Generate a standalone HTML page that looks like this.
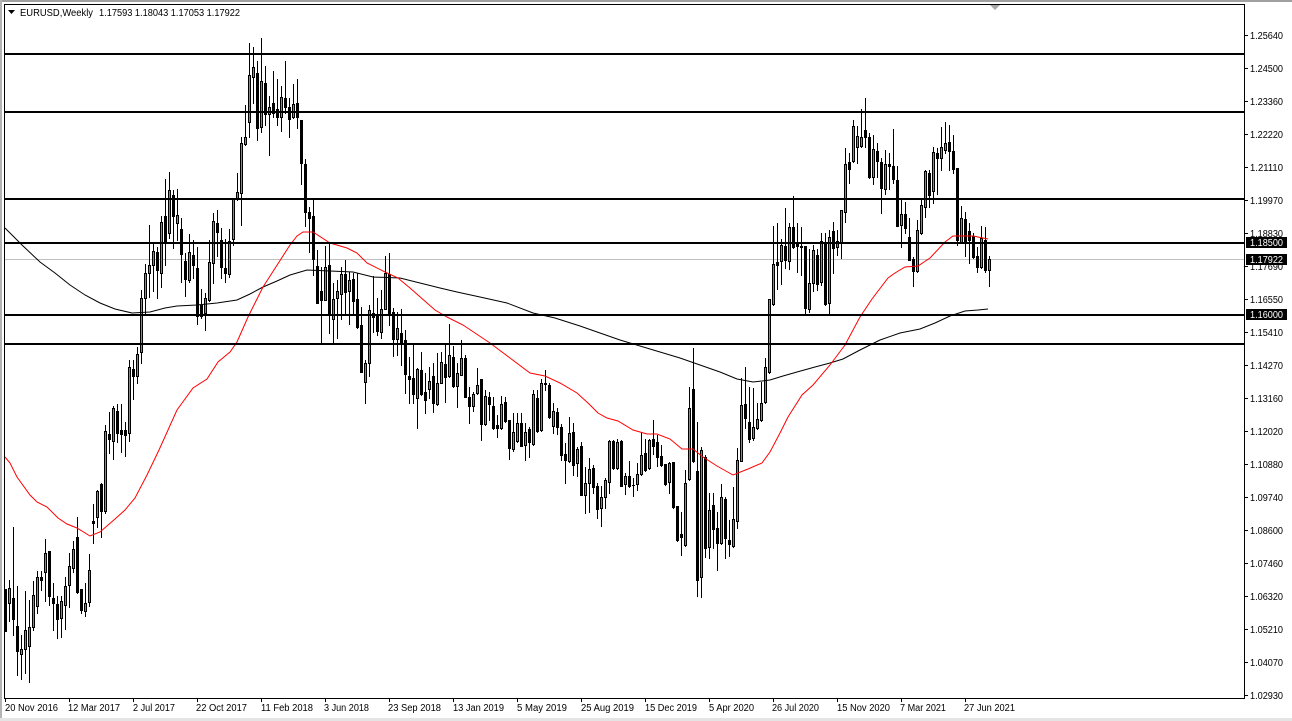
<!DOCTYPE html>
<html><head><meta charset="utf-8"><title>EURUSD,Weekly</title>
<style>
html,body{margin:0;padding:0;background:#fff;width:1292px;height:721px;overflow:hidden}
svg{display:block;position:absolute;left:0;top:0}
text{font-family:"Liberation Sans",sans-serif;font-size:10px;fill:#000}
.w{fill:#fff}
</style></head><body>
<svg width="1292" height="721" viewBox="0 0 1292 721" xmlns="http://www.w3.org/2000/svg">
<rect width="1292" height="721" fill="#fff"/>
<rect x="0" y="0" width="1292" height="2" fill="#a0a0a0"/>
<rect x="0" y="0" width="2" height="721" fill="#b4b4b4"/>
<rect x="0" y="718" width="1292" height="3" fill="#e4e4e4"/>
<g shape-rendering="crispEdges">
<rect x="4" y="4" width="1" height="695" fill="#000"/>
<rect x="4" y="4" width="1241" height="1" fill="#000"/>
<rect x="1244" y="4" width="1" height="695" fill="#000"/>
<rect x="4" y="698" width="1241" height="1" fill="#000"/>
<rect x="5" y="259" width="1239" height="1" fill="#c0c0c0"/>
<path fill="none" stroke="#000" stroke-width="1" d="M5.5 589V632M9.5 580V622M13.5 527V636M17.5 586V676M21.5 635V680M25.5 591V674M29.5 600V683M33.5 581V631M37.5 571V614M41.5 571V591M45.5 539V602M49.5 551V606M53.5 583V631M57.5 596V639M61.5 596V638M65.5 577V630M69.5 553V608M73.5 541V573M77.5 517V594M81.5 589V614M85.5 583V617M89.5 554V607M93.5 504V544M97.5 490V528M101.5 483V538M105.5 425V514M109.5 412V454M113.5 406V460M117.5 404V443M121.5 404V453M125.5 422V457M129.5 360V442M133.5 360V400M137.5 347V384M141.5 290V364M145.5 264V314M149.5 225V298M153.5 243V292M157.5 247V299M161.5 216V288M165.5 179V266M169.5 172V239M173.5 190V249M177.5 189V241M181.5 218V283M185.5 253V297M189.5 234V283M193.5 240V279M197.5 247V325M201.5 289V319M205.5 293V331M209.5 240V302M213.5 213V284M217.5 210V257M221.5 228V279M225.5 239V283M229.5 229V278M233.5 198V246M237.5 173V201M241.5 137V226M245.5 105V146M249.5 43V138M253.5 47V104M257.5 61V141M261.5 38V133M265.5 66V126M269.5 96V156M273.5 71V118M277.5 79V126M281.5 86V132M285.5 61V114M289.5 98V138M293.5 84V119M297.5 79V129M301.5 120V185M305.5 159V227M309.5 207V253M313.5 200V276M317.5 250V304M321.5 267V344M325.5 246V301M329.5 242V334M333.5 283V344M337.5 280V339M341.5 267V320M345.5 260V314M349.5 272V325M353.5 273V316M357.5 273V329M361.5 307V373M365.5 360V404M369.5 305V377M373.5 276V333M377.5 298V336M381.5 290V339M385.5 256V310M389.5 253V326M393.5 308V357M397.5 312V356M401.5 309V366M405.5 330V394M409.5 357V404M413.5 344V404M417.5 368V429M421.5 352V396M425.5 373V414M429.5 367V399M433.5 363V413M437.5 353V406M441.5 352V384M445.5 344V403M449.5 324V378M453.5 346V388M457.5 363V408M461.5 340V376M465.5 355V398M469.5 387V424M473.5 392V412M477.5 368V395M481.5 379V441M485.5 390V426M489.5 392V421M493.5 397V430M497.5 415V438M501.5 396V430M505.5 397V423M509.5 420V460M513.5 413V452M517.5 413V443M521.5 413V447M525.5 423V461M529.5 427V458M533.5 390V446M537.5 390V433M541.5 379V432M545.5 370V391M549.5 383V419M553.5 403V434M557.5 408V435M561.5 424V461M565.5 443V484M569.5 417V463M573.5 423V476M577.5 447V477M581.5 442V496M585.5 467V514M589.5 458V513M593.5 465V494M597.5 483V519M601.5 486V527M605.5 478V509M609.5 440V494M613.5 440V470M617.5 439V470M621.5 440V487M625.5 473V495M629.5 461V488M633.5 478V497M637.5 463V491M641.5 432V476M645.5 439V472M649.5 439V470M653.5 420V455M657.5 435V467M661.5 445V467M665.5 464V486M669.5 462V494M673.5 462V509M677.5 506V542M681.5 512V556M685.5 470V547M689.5 387V481M693.5 348V463M697.5 422V597M701.5 447V598M705.5 455V558M709.5 493V559M713.5 493V549M717.5 512V571M721.5 484V545M725.5 497V559M729.5 520V557M733.5 487V548M737.5 448V529M741.5 378V462M745.5 367V429M749.5 387V443M753.5 388V441M757.5 403V430M761.5 382V422M765.5 358V404M769.5 299V374M773.5 226V306M777.5 223V290M781.5 239V285M785.5 208V269M789.5 223V270M793.5 196V249M797.5 223V273M801.5 227V276M805.5 246V314M809.5 249V313M813.5 245V292M817.5 249V291M821.5 233V286M825.5 233V306M829.5 230V316M833.5 222V274M837.5 230V256M841.5 210V259M845.5 148V223M849.5 153V184M853.5 120V163M857.5 126V164M861.5 109V148M865.5 98V148M869.5 133V179M873.5 135V185M877.5 143V178M881.5 158V214M885.5 150V195M889.5 153V190M893.5 129V184M897.5 166V227M901.5 198V248M905.5 202V234M909.5 218V261M913.5 257V287M917.5 220V273M921.5 198V235M925.5 170V218M929.5 170V208M933.5 147V204M937.5 148V195M941.5 127V171M945.5 122V154M949.5 125V171M953.5 135V174M957.5 168V246M961.5 206V244M965.5 212V257M969.5 223V264M973.5 233V259M977.5 247V273M981.5 226V269M985.5 227V273M989.5 256V287"/>
<path fill="none" stroke="#000" stroke-width="3" d="M5.5 589V632M9.5 588V604M13.5 598V620M17.5 626V652M21.5 649V655M25.5 630V650M29.5 627V647M33.5 595V628M37.5 577V607M41.5 577V581M45.5 553V573M49.5 551V597M53.5 598V604M57.5 604V620M61.5 601V619M65.5 586V606M69.5 566V586M73.5 549V569M77.5 537V593M81.5 589V611M85.5 603V612M89.5 570V603M93.5 521V524M97.5 491V518M101.5 484V512M105.5 431V512M109.5 434V440M113.5 408V442M117.5 411V434M121.5 430V435M125.5 430V436M129.5 367V434M133.5 369V377M137.5 354V377M141.5 298V353M145.5 273V299M149.5 265V274M153.5 251V266M157.5 252V271M161.5 222V274M165.5 216V242M169.5 190V234M173.5 195V217M177.5 215V224M181.5 229V255M185.5 261V280M189.5 252V281M193.5 255V266M197.5 268V317M201.5 305V317M205.5 298V314M209.5 262V301M213.5 221V264M217.5 223V233M221.5 240V268M225.5 268V274M229.5 241V275M233.5 199V240M237.5 192V200M241.5 143V194M245.5 137V145M249.5 75V123M253.5 67V78M257.5 73V129M261.5 81V128M265.5 83V115M269.5 107V115M273.5 103V114M277.5 109V118M281.5 97V118M285.5 98V108M289.5 107V120M293.5 104V118M297.5 103V118M301.5 120V164M305.5 164V213M309.5 212V219M313.5 216V260M317.5 266V304M321.5 291V301M325.5 267V301M329.5 265V316M333.5 299V320M337.5 291V299M341.5 274V295M345.5 274V293M349.5 280V292M353.5 279V302M357.5 299V328M361.5 325V373M365.5 363V383M369.5 310V364M373.5 313V318M377.5 314V332M381.5 309V333M385.5 273V310M389.5 274V315M393.5 312V340M397.5 328V340M401.5 333V343M405.5 340V375M409.5 376V380M413.5 378V395M417.5 369V399M421.5 370V395M425.5 392V401M429.5 381V390M433.5 376V404M437.5 383V405M441.5 362V384M445.5 364V378M449.5 355V377M453.5 357V387M457.5 373V387M461.5 358V376M465.5 358V398M469.5 397V407M473.5 394V407M477.5 385V394M481.5 379V425M485.5 396V425M489.5 397V405M493.5 406V429M497.5 425V429M501.5 404V429M505.5 402V422M509.5 420V449M513.5 432V450M517.5 423V442M521.5 423V447M525.5 432V446M529.5 429V443M533.5 394V445M537.5 398V432M541.5 383V431M545.5 383V385M549.5 385V418M553.5 411V427M557.5 412V428M561.5 427V456M565.5 454V461M569.5 433V462M573.5 432V466M577.5 449V464M581.5 446V496M585.5 483V496M589.5 469V484M593.5 468V488M597.5 486V510M601.5 497V509M605.5 480V498M609.5 441V483M613.5 441V469M617.5 442V469M621.5 441V487M625.5 476V485M629.5 476V487M633.5 485V486M637.5 474V485M641.5 455V475M645.5 453V471M649.5 440V469M653.5 439V447M657.5 442V458M661.5 456V466M665.5 464V485M669.5 463V483M673.5 462V508M677.5 506V541M681.5 534V538M685.5 483V546M689.5 408V480M693.5 389V462M697.5 471V581M701.5 450V578M705.5 457V549M709.5 510V548M713.5 505V530M717.5 528V544M721.5 497V544M725.5 499V539M729.5 540V545M733.5 519V547M737.5 460V522M741.5 405V462M745.5 404V419M749.5 422V440M753.5 427V439M757.5 419V429M761.5 403V421M765.5 367V403M769.5 299V373M773.5 264V305M777.5 262V266M781.5 245V262M785.5 246V261M789.5 227V262M793.5 227V248M797.5 243V247M801.5 246V248M805.5 246V309M809.5 283V310M813.5 250V284M817.5 255V285M821.5 241V283M825.5 243V305M829.5 237V304M833.5 231V249M837.5 241V248M841.5 210V243M845.5 164V213M849.5 162V170M853.5 126V162M857.5 136V148M861.5 137V147M865.5 130V138M869.5 137V178M873.5 149V178M877.5 151V162M881.5 162V189M885.5 164V190M889.5 164V167M893.5 166V180M897.5 180V227M901.5 214V226M905.5 214V229M909.5 237V261M913.5 259V272M917.5 230V272M921.5 205V234M925.5 171V208M929.5 173V196M933.5 152V192M937.5 153V159M941.5 147V159M945.5 143V151M949.5 142V152M953.5 151V170M957.5 168V241M961.5 218V243M965.5 219V243M969.5 231V241M973.5 236V258M977.5 256V268M981.5 238V268M985.5 240V271M989.5 259V271"/>
<path fill="none" stroke="#1fd21f" stroke-width="1" d="M9.5 589V603M21.5 650V654M25.5 631V649M29.5 628V646M33.5 596V627M37.5 578V606M45.5 554V572M61.5 602V618M65.5 587V605M69.5 567V585M73.5 550V568M85.5 604V611M89.5 571V602M97.5 492V517M105.5 432V511M113.5 409V441M129.5 368V433M137.5 355V376M141.5 299V352M145.5 274V298M149.5 266V273M153.5 252V265M161.5 223V273M169.5 191V233M177.5 216V223M189.5 253V280M205.5 299V313M209.5 263V300M213.5 222V263M229.5 242V274M233.5 200V239M237.5 193V199M241.5 144V193M245.5 138V144M249.5 76V122M253.5 68V77M261.5 82V127M269.5 108V114M281.5 98V117M293.5 105V117M325.5 268V300M333.5 300V319M337.5 292V298M341.5 275V294M349.5 281V291M365.5 364V382M369.5 311V363M381.5 310V332M385.5 274V309M397.5 329V339M417.5 370V398M429.5 382V389M437.5 384V404M441.5 363V383M449.5 356V376M457.5 374V386M461.5 359V375M473.5 395V406M477.5 386V393M485.5 397V424M501.5 405V428M513.5 433V449M517.5 424V441M525.5 433V445M533.5 395V444M541.5 384V430M553.5 412V426M569.5 434V461M577.5 450V463M585.5 484V495M589.5 470V483M601.5 498V508M605.5 481V497M609.5 442V482M617.5 443V468M625.5 477V484M637.5 475V484M641.5 456V474M649.5 441V468M669.5 464V482M685.5 484V545M689.5 409V479M701.5 451V577M709.5 511V547M721.5 498V543M733.5 520V546M737.5 461V521M741.5 406V461M753.5 428V438M757.5 420V428M761.5 404V420M765.5 368V402M769.5 300V372M773.5 265V304M781.5 246V261M789.5 228V261M809.5 284V309M813.5 251V283M821.5 242V282M829.5 238V303M837.5 242V247M841.5 211V242M845.5 165V212M853.5 127V161M857.5 137V147M861.5 138V146M873.5 150V177M885.5 165V189M901.5 215V225M917.5 231V271M921.5 206V233M925.5 172V207M933.5 153V191M941.5 148V158M945.5 144V150M961.5 219V242M981.5 239V267M989.5 260V270"/>
</g>
<path fill="none" stroke="#000" stroke-width="1" d="M5 228L22 245L40 262L55 273L70 285L85 295L100 303L115 309L132 313L150 312L165 308L177 306L197 305L217 303L237 300L250 294L263 287L277 281L290 275L307 270L330 271L353 272L373 277L400 278L420 283L440 288L457 292L480 297L507 303L533 313L555 318L580 326L600 333L620 340L650 349L680 358L700 365L720 372L737 379L753 382L770 380L783 376L797 372L815 367L830 363L843 359L860 350L880 340L900 333L920 329L935 323L950 316L965 311L978 310L988 309"/>
<path fill="none" stroke="#f00" stroke-width="1" d="M5 457L10 463L17 477L30 495L37 502L47 507L58 518L67 524L77 528L90 536L100 532L115 519L125 510L135 498L147 475L159 450L177 410L193 388L207 379L218 362L230 352L237 342L248 317L263 287L290 245L297 236L303 232L313 232L330 243L347 248L357 253L367 263L385 272L398 278L410 288L435 310L447 317L463 325L490 343L510 358L530 373L545 376L560 383L577 393L588 403L598 413L607 418L618 421L633 430L647 434L657 434L670 439L682 449L693 449L703 457L717 466L733 475L748 469L762 463L770 452L780 433L788 417L802 395L813 385L830 365L845 345L860 317L872 299L888 278L895 273L905 267L918 266L930 258L945 242L953 236L973 236L988 239"/>
<g shape-rendering="crispEdges" fill="#000">
<rect x="5" y="53" width="1239" height="2"/>
<rect x="5" y="111" width="1239" height="2"/>
<rect x="5" y="198" width="1239" height="2"/>
<rect x="5" y="242" width="1239" height="2"/>
<rect x="5" y="314" width="1239" height="2"/>
<rect x="5" y="343" width="1239" height="2"/>
<path d="M1245 35h3v1h-3zM1245 68h3v1h-3zM1245 101h3v1h-3zM1245 134h3v1h-3zM1245 167h3v1h-3zM1245 200h3v1h-3zM1245 233h3v1h-3zM1245 266h3v1h-3zM1245 299h3v1h-3zM1245 332h3v1h-3zM1245 365h3v1h-3zM1245 398h3v1h-3zM1245 431h3v1h-3zM1245 464h3v1h-3zM1245 497h3v1h-3zM1245 530h3v1h-3zM1245 563h3v1h-3zM1245 596h3v1h-3zM1245 629h3v1h-3zM1245 662h3v1h-3zM1245 695h3v1h-3z"/>
<path d="M5 699h1v3h-1zM69 699h1v3h-1zM133 699h1v3h-1zM197 699h1v3h-1zM261 699h1v3h-1zM325 699h1v3h-1zM389 699h1v3h-1zM453 699h1v3h-1zM517 699h1v3h-1zM581 699h1v3h-1zM645 699h1v3h-1zM709 699h1v3h-1zM773 699h1v3h-1zM837 699h1v3h-1zM901 699h1v3h-1zM965 699h1v3h-1z"/>
</g>
<path d="M8 10H15L11.5 14Z" fill="#000"/>
<path d="M990 5H1000L995 10Z" fill="#a8a8a8"/>
<text x="20" y="16" textLength="73" lengthAdjust="spacingAndGlyphs">EURUSD,Weekly</text>
<text x="99" y="16" textLength="141" lengthAdjust="spacingAndGlyphs">1.17593 1.18043 1.17053 1.17922</text>
<g>
<text x="1250" y="39" textLength="33" lengthAdjust="spacingAndGlyphs">1.25640</text>
<text x="1250" y="72" textLength="33" lengthAdjust="spacingAndGlyphs">1.24500</text>
<text x="1250" y="105" textLength="33" lengthAdjust="spacingAndGlyphs">1.23360</text>
<text x="1250" y="138" textLength="33" lengthAdjust="spacingAndGlyphs">1.22220</text>
<text x="1250" y="171" textLength="33" lengthAdjust="spacingAndGlyphs">1.21110</text>
<text x="1250" y="204" textLength="33" lengthAdjust="spacingAndGlyphs">1.19970</text>
<text x="1250" y="237" textLength="33" lengthAdjust="spacingAndGlyphs">1.18830</text>
<text x="1250" y="270" textLength="33" lengthAdjust="spacingAndGlyphs">1.17690</text>
<text x="1250" y="303" textLength="33" lengthAdjust="spacingAndGlyphs">1.16550</text>
<text x="1250" y="336" textLength="33" lengthAdjust="spacingAndGlyphs">1.15410</text>
<text x="1250" y="369" textLength="33" lengthAdjust="spacingAndGlyphs">1.14270</text>
<text x="1250" y="402" textLength="33" lengthAdjust="spacingAndGlyphs">1.13160</text>
<text x="1250" y="435" textLength="33" lengthAdjust="spacingAndGlyphs">1.12020</text>
<text x="1250" y="468" textLength="33" lengthAdjust="spacingAndGlyphs">1.10880</text>
<text x="1250" y="501" textLength="33" lengthAdjust="spacingAndGlyphs">1.09740</text>
<text x="1250" y="534" textLength="33" lengthAdjust="spacingAndGlyphs">1.08600</text>
<text x="1250" y="567" textLength="33" lengthAdjust="spacingAndGlyphs">1.07460</text>
<text x="1250" y="600" textLength="33" lengthAdjust="spacingAndGlyphs">1.06320</text>
<text x="1250" y="633" textLength="33" lengthAdjust="spacingAndGlyphs">1.05210</text>
<text x="1250" y="666" textLength="33" lengthAdjust="spacingAndGlyphs">1.04070</text>
<text x="1250" y="699" textLength="33" lengthAdjust="spacingAndGlyphs">1.02930</text>
</g>
<g shape-rendering="crispEdges" fill="#000">
<rect x="1246" y="237" width="41" height="11"/>
<rect x="1246" y="254" width="41" height="11"/>
<rect x="1246" y="309" width="41" height="11"/>
</g>
<text class="w" x="1250" y="246" textLength="33" lengthAdjust="spacingAndGlyphs">1.18500</text>
<text class="w" x="1250" y="263" textLength="33" lengthAdjust="spacingAndGlyphs">1.17922</text>
<text class="w" x="1250" y="318" textLength="33" lengthAdjust="spacingAndGlyphs">1.16000</text>
<g>
<text x="5" y="711" textLength="53" lengthAdjust="spacingAndGlyphs">20 Nov 2016</text>
<text x="68" y="711" textLength="52" lengthAdjust="spacingAndGlyphs">12 Mar 2017</text>
<text x="133" y="711" textLength="42" lengthAdjust="spacingAndGlyphs">2 Jul 2017</text>
<text x="196" y="711" textLength="51" lengthAdjust="spacingAndGlyphs">22 Oct 2017</text>
<text x="261" y="711" textLength="52" lengthAdjust="spacingAndGlyphs">11 Feb 2018</text>
<text x="324" y="711" textLength="45" lengthAdjust="spacingAndGlyphs">3 Jun 2018</text>
<text x="388" y="711" textLength="53" lengthAdjust="spacingAndGlyphs">23 Sep 2018</text>
<text x="453" y="711" textLength="51" lengthAdjust="spacingAndGlyphs">13 Jan 2019</text>
<text x="517" y="711" textLength="50" lengthAdjust="spacingAndGlyphs">5 May 2019</text>
<text x="581" y="711" textLength="53" lengthAdjust="spacingAndGlyphs">25 Aug 2019</text>
<text x="645" y="711" textLength="52" lengthAdjust="spacingAndGlyphs">15 Dec 2019</text>
<text x="709" y="711" textLength="45" lengthAdjust="spacingAndGlyphs">5 Apr 2020</text>
<text x="772" y="711" textLength="47" lengthAdjust="spacingAndGlyphs">26 Jul 2020</text>
<text x="837" y="711" textLength="53" lengthAdjust="spacingAndGlyphs">15 Nov 2020</text>
<text x="900" y="711" textLength="46" lengthAdjust="spacingAndGlyphs">7 Mar 2021</text>
<text x="964" y="711" textLength="51" lengthAdjust="spacingAndGlyphs">27 Jun 2021</text>
</g>
</svg>
</body></html>
